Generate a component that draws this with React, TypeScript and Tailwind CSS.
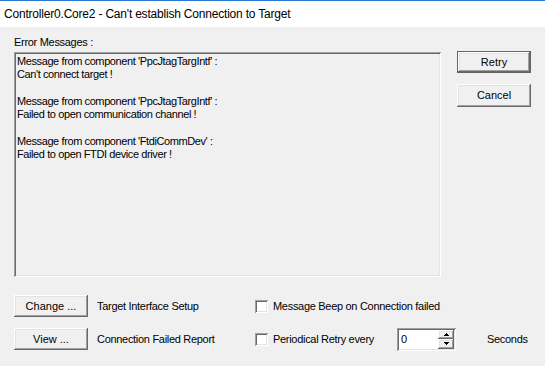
import React from "react";

const btn =
  "flex items-center justify-center bg-[#f0f0f0] text-black shadow-[inset_-1px_-1px_#696969,inset_1px_1px_#ffffff,inset_-2px_-2px_#a0a0a0,inset_2px_2px_#e3e3e3]";
const sunken =
  "shadow-[inset_1px_1px_#a0a0a0,inset_-1px_-1px_#ffffff,inset_2px_2px_#696969,inset_-2px_-2px_#e3e3e3]";

function Check({ label, w }: { label: string; w: string }) {
  return (
    <div className={`flex items-center ${w}`}>
      <div className={`w-[13px] h-[13px] bg-white ${sunken}`} />
      <span className="ml-[5px]">{label}</span>
    </div>
  );
}

export default function App() {
  const lines = [
    "Message from component 'PpcJtagTargIntf' :",
    "Can't connect target !",
    "",
    "Message from component 'PpcJtagTargIntf' :",
    "Failed to open communication channel !",
    "",
    "Message from component 'FtdiCommDev' :",
    "Failed to open FTDI device driver !",
  ];
  return (
    <div
      className="w-[545px] h-[366px] bg-[#f0f0f0] flex flex-col overflow-hidden text-[11px] text-black tracking-[-0.3px]"
      style={{ fontFamily: '"Liberation Sans", Arial, sans-serif' }}
    >
      <div className="h-[27px] bg-white border-t border-[#2b79d0] flex items-center pl-[4px] text-[12px] pb-[1px] tracking-[-0.2px]">
        Controller0.Core2 - Can&apos;t establish Connection to Target
      </div>
      <div className="flex pl-[14px] pt-[9px]">
        <div className="flex flex-col w-[427px]">
          <div className="h-[16px] leading-[13px]">Error Messages :</div>
          <div className={`h-[225px] ${sunken} pl-[3px] pt-[3px] leading-[13.3px] tracking-[-0.4px]`}>
            {lines.map((l, i) => (
              <div key={i} className="h-[13.3px] whitespace-pre">
                {l || " "}
              </div>
            ))}
          </div>
        </div>
        <div className="flex flex-col ml-[16px] pt-[15px] tracking-normal">
          <div className="w-[74px] h-[22px] border border-[#646464] bg-[#f0f0f0]">
            <div className={`${btn} w-full h-full`}>Retry</div>
          </div>
          <div className={`${btn} w-[74px] h-[23px] mt-[11px]`}>Cancel</div>
        </div>
      </div>
      <div className="flex flex-col pl-[14px] mt-[18px] gap-[11px]">
        <div className="flex items-center h-[22px]">
          <div className={`${btn} w-[74px] h-[22px] tracking-normal`}>Change ...</div>
          <span className="ml-[9px] w-[158px]">Target Interface Setup</span>
          <Check label="Message Beep on Connection failed" w="w-[200px]" />
        </div>
        <div className="flex items-center h-[22px]">
          <div className={`${btn} w-[74px] h-[22px] tracking-normal`}>View ...</div>
          <span className="ml-[9px] w-[158px]">Connection Failed Report</span>
          <Check label="Periodical Retry every" w="w-[142px]" />
          <div className={`w-[59px] h-[23px] bg-white ${sunken} flex items-center pl-[4px] pr-[2px]`}>
            <span className="flex-1">0</span>
            <div className="flex flex-col w-[16px] h-[19px]">
              <div className={`${btn} h-[9px] w-full`}>
                <svg width="5" height="3" viewBox="0 0 5 3">
                  <path d="M2 0h1v1h1v1h1v1H0V2h1V1h1z" fill="#000" />
                </svg>
              </div>
              <div className={`${btn} h-[10px] w-full`}>
                <svg width="5" height="3" viewBox="0 0 5 3">
                  <path d="M0 0h5v1H4v1H3v1H2V2H1V1H0z" fill="#000" />
                </svg>
              </div>
            </div>
          </div>
          <span className="ml-[31px]">Seconds</span>
        </div>
      </div>
    </div>
  );
}
